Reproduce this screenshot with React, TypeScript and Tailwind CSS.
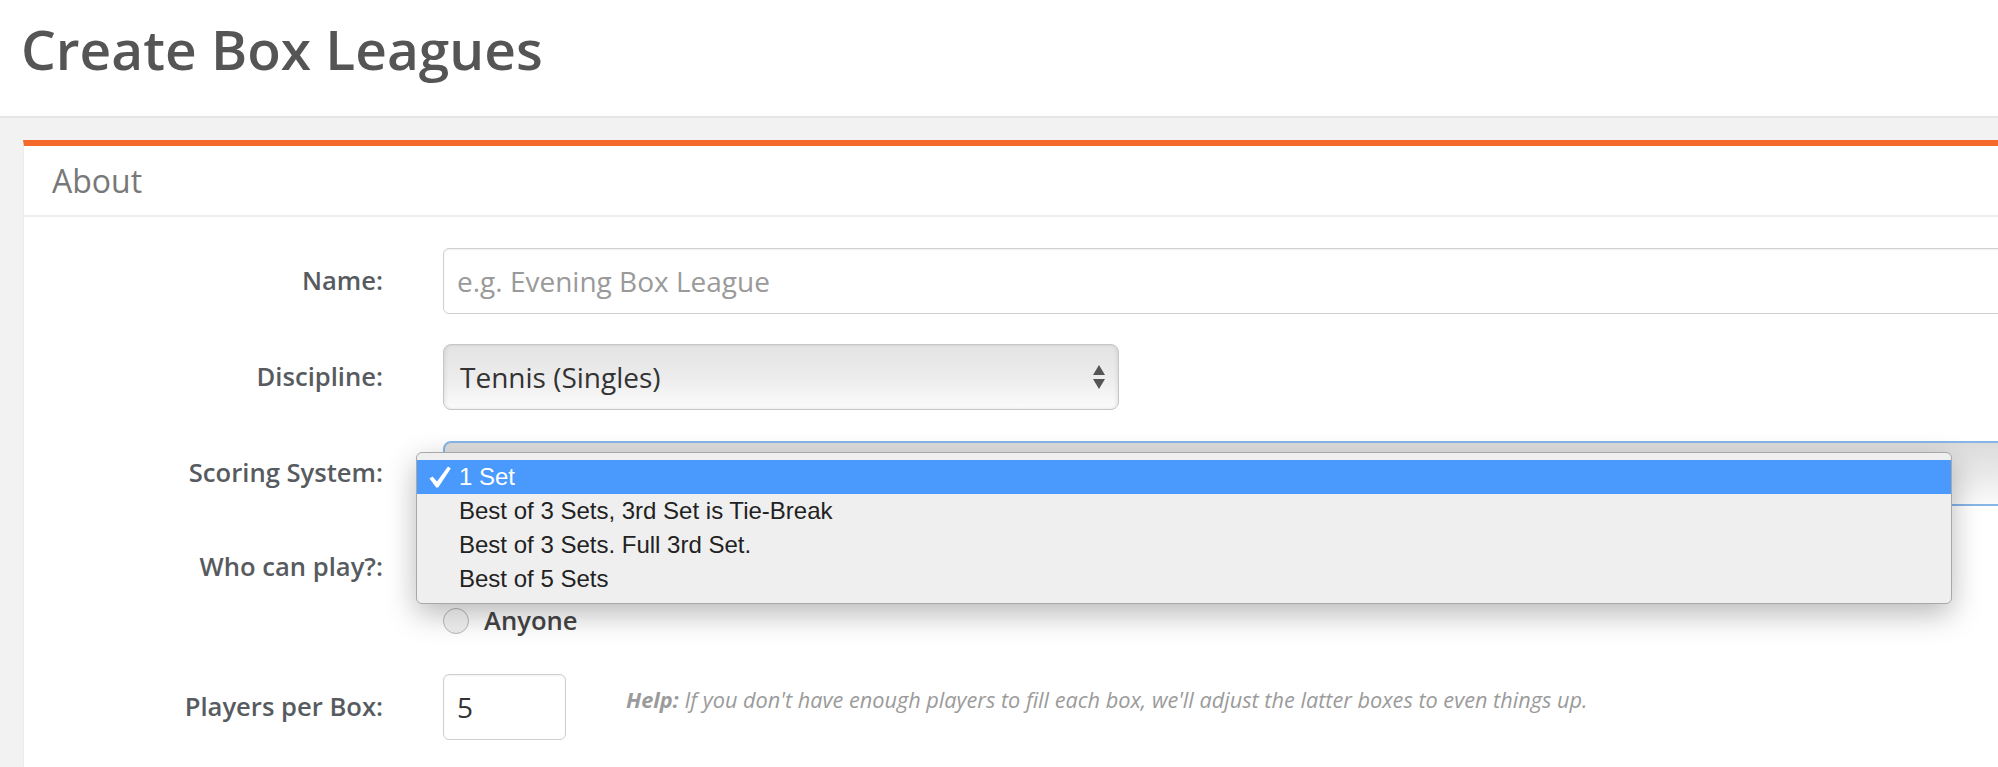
import React from 'react';

const labelCls = 'w-[359px] shrink-0 text-right text-[25.6px] font-semibold text-[#575b60]';

const scoringOptions = [
  '1 Set',
  'Best of 3 Sets, 3rd Set is Tie-Break',
  'Best of 3 Sets. Full 3rd Set.',
  'Best of 5 Sets',
];

const SelectArrows = () => (
  <svg width="12" height="24" viewBox="0 0 12 24" className="shrink-0">
    <polygon points="6,0 12,10 0,10" fill="#555" />
    <polygon points="0,14 12,14 6,24" fill="#555" />
  </svg>
);

const Radio = ({ label }: { label?: string }) => (
  <label className="flex h-[52px] items-center gap-[15px]">
    <span className="h-[26px] w-[26px] rounded-full border border-[#b8b8b8] bg-gradient-to-b from-white to-[#ededed]" />
    {label && <span className="text-[25.6px] font-semibold text-[#454545]">{label}</span>}
  </label>
);

export default function App() {
  return (
    <div className="min-h-screen w-full overflow-hidden bg-[#f2f2f2] font-['Open_Sans',sans-serif]">
      <header className="h-[118px] border-b-2 border-[#e6e6e6] bg-white pl-[21px] pt-[21px]">
        <h1 className="text-[55px] font-semibold leading-none text-[#555555]">Create Box Leagues</h1>
      </header>

      <div className="pl-[23px] pt-[22px]">
        <section className="w-[2100px] border-l border-t-[6px] border-l-[#ececec] border-t-[#f5692a] bg-white">
          <div className="flex h-[71px] items-center border-b-2 border-[#eeeeee] px-[28px]">
            <h2 className="text-[32px] text-[#787878]">About</h2>
          </div>

          <div className="pb-[60px] pt-[31px]">
            {/* Name */}
            <div className="flex items-center gap-[60px]">
              <div className={labelCls}>Name:</div>
              <input
                className="h-[66px] w-[1600px] rounded-[6px] border border-[#cfcfcf] px-[13px] text-[28px] text-[#333] shadow-[inset_0_1px_2px_rgba(0,0,0,0.06)] outline-none placeholder:text-[#9a9a9a]"
                placeholder="e.g. Evening Box League"
              />
            </div>

            {/* Discipline */}
            <div className="mt-[30px] flex items-center gap-[60px]">
              <div className={labelCls}>Discipline:</div>
              <div className="flex h-[66px] w-[676px] items-center justify-between rounded-[8px] border border-[#c6c6c6] bg-gradient-to-b from-[#e3e3e3] via-[#ececec] to-[#fbfbfb] pl-[16px] pr-[13px] shadow-[inset_2px_0_3px_rgba(0,0,0,0.06),inset_-2px_0_3px_rgba(0,0,0,0.06)]">
                <span className="text-[28px] text-[#333]">Tennis (Singles)</span>
                <SelectArrows />
              </div>
            </div>

            {/* Scoring system, with its native menu open */}
            <div className="mt-[31px] flex items-center gap-[60px]">
              <div className={labelCls}>Scoring System:</div>
              <div className="relative">
                <div className="h-[65px] w-[1600px] rounded-[8px] border-2 border-[#86b6e8] bg-gradient-to-b from-[#dcdcdc] via-[#e9e9e9] to-[#fafafa]" />
                <div className="absolute left-[-27px] top-[11px] z-10 h-[152px] w-[1536px] rounded-[6px] border border-[#a8a8a8] bg-[#efefef] py-[7px] font-['Liberation_Sans',Arial,sans-serif] text-[24px] text-[#222] shadow-[0_10px_30px_rgba(0,0,0,0.28)]">
                  {scoringOptions.map((opt, i) => (
                    <div
                      key={opt}
                      className={
                        i === 0
                          ? 'relative flex h-[34px] items-center bg-[#4a9afd] pl-[42px] text-white'
                          : 'relative flex h-[34px] items-center pl-[42px]'
                      }
                    >
                      {i === 0 && (
                        <svg width="22" height="22" viewBox="0 0 22 22" className="absolute left-[12px] top-[6px]">
                          <path d="M0.5 12.5 L3.5 10.5 L8 15.5 L19 0.5 L21.8 2.5 L9.2 21.5 L7.2 21.5 Z" fill="#fff" />
                        </svg>
                      )}
                      {opt}
                    </div>
                  ))}
                </div>
              </div>
            </div>

            {/* Who can play */}
            <div className="mt-[31px] flex items-start gap-[60px]">
              <div className={`${labelCls} leading-[60px]`}>Who can play?:</div>
              <div className="pt-[6px]">
                <Radio />
                <Radio label="Anyone" />
              </div>
            </div>

            {/* Players per box */}
            <div className="mt-[27px] flex items-center gap-[60px]">
              <div className={labelCls}>Players per Box:</div>
              <input
                className="h-[66px] w-[123px] shrink-0 rounded-[6px] border border-[#cfcfcf] px-[13px] text-[28px] text-[#333] shadow-[inset_0_1px_2px_rgba(0,0,0,0.06)] outline-none"
                defaultValue="5"
              />
              <p className="mb-[14px] text-[21.7px] italic text-[#9b9b9b]">
                <span className="font-bold">Help:</span> If you don't have enough players to fill each box, we'll adjust the latter boxes to even things up.
              </p>
            </div>
          </div>
        </section>
      </div>
    </div>
  );
}
